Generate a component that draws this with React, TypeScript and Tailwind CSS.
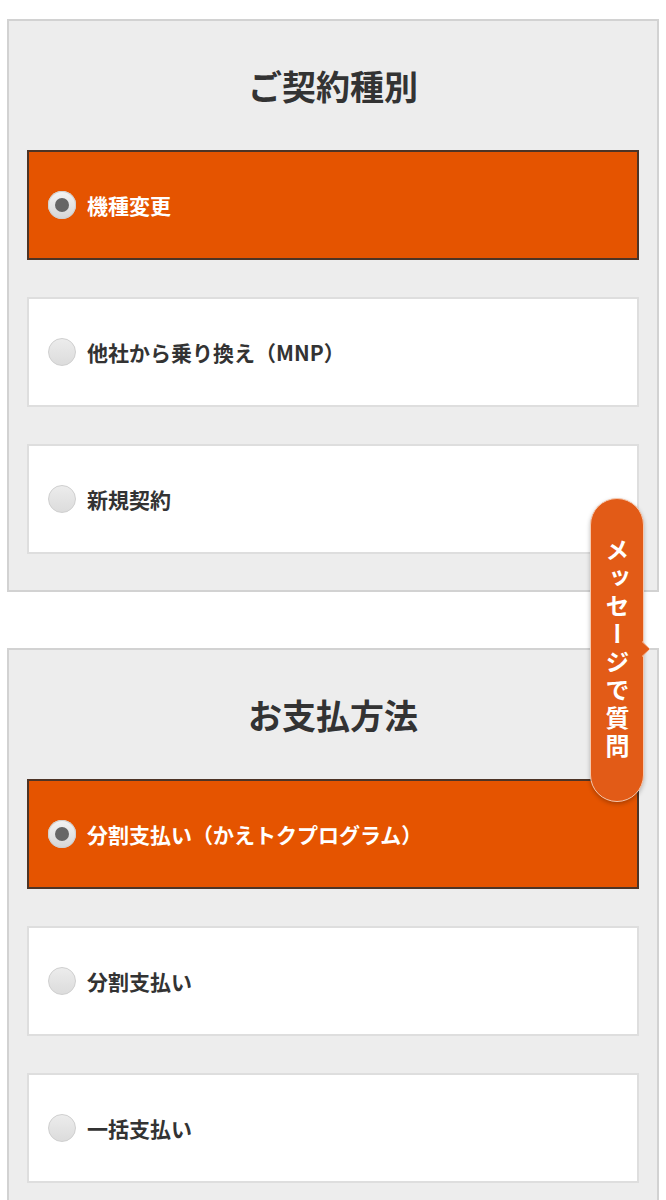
import React from "react";

const font = { fontFamily: '"Noto Sans CJK JP", "Noto Sans", sans-serif' };

function Radio({ checked }: { checked: boolean }) {
  if (checked) {
    return (
      <span className="flex h-[28px] w-[28px] shrink-0 items-center justify-center rounded-full bg-[linear-gradient(180deg,#f4f4f4,#d6d6d6)] shadow-[inset_0_0_0_1px_#cfcfcf]">
        <span className="h-[14px] w-[14px] rounded-full bg-[#666]" />
      </span>
    );
  }
  return (
    <span className="h-[28px] w-[28px] shrink-0 rounded-full border border-[#cfcfcf] bg-[linear-gradient(180deg,#ececec,#dcdcdc)]" />
  );
}

function Option({ label, checked }: { label: string; checked?: boolean }) {
  return (
    <div
      className={
        "flex h-[110px] items-center gap-[11px] border-2 pl-[19px] " +
        (checked ? "border-[#4d3426] bg-[#e55400] text-white" : "border-[#dedede] bg-white text-[#333]")
      }
    >
      <Radio checked={!!checked} />
      <span className="text-[21px] font-bold leading-none">{label}</span>
    </div>
  );
}

function Section({ title, options }: { title: string; options: { label: string; checked?: boolean }[] }) {
  return (
    <div className="border-2 border-[#d2d2d2] bg-[#ededed] px-[18px] pb-[36px] pt-[48px]">
      <h2 className="mb-[47px] text-center text-[34px] font-bold leading-[34px] text-[#333]">{title}</h2>
      <div className="flex flex-col gap-[37px]">
        {options.map((o) => (
          <Option key={o.label} label={o.label} checked={o.checked} />
        ))}
      </div>
    </div>
  );
}

export default function App() {
  return (
    <div className="relative min-h-[1200px] w-[666px] bg-white" style={font}>
      <div className="flex flex-col gap-[56px] px-[7px] pt-[19px]">
        <Section
          title="ご契約種別"
          options={[
            { label: "機種変更", checked: true },
            { label: "他社から乗り換え（MNP）" },
            { label: "新規契約" },
          ]}
        />
        <Section
          title="お支払方法"
          options={[
            { label: "分割支払い（かえトクプログラム）", checked: true },
            { label: "分割支払い" },
            { label: "一括支払い" },
          ]}
        />
      </div>

      <div className="absolute left-[590px] top-[498px] h-[304px] w-[54px]">
        <div className="flex h-full w-full items-center justify-center rounded-full border-[1.5px] border-[#f6c8ae] bg-[#e25b17] shadow-[0_2px_4px_rgba(0,0,0,0.25)]">
          <span className="text-[24px] font-bold leading-none tracking-[4px] text-white [writing-mode:vertical-rl]">
            メッセージで質問
          </span>
        </div>
        <svg className="absolute left-[52px] top-[143px]" width="10" height="16" viewBox="0 0 10 16">
          <path d="M0 0 L8 8 L0 16 Z" fill="#e25b17" />
          <path d="M0 0.5 L8 8 L0 15.5" fill="none" stroke="#f6c8ae" strokeWidth="1" />
        </svg>
      </div>
    </div>
  );
}
